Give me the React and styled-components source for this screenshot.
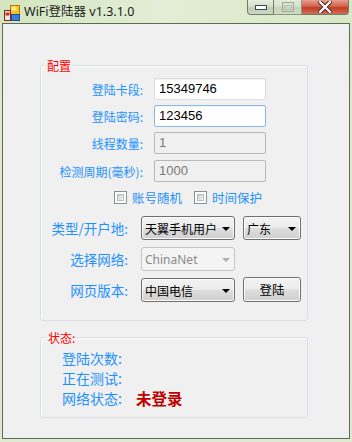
import React from 'react';
import styled, { createGlobalStyle } from 'styled-components';

const Global = createGlobalStyle`
  html, body { margin: 0; padding: 0; background: #dbe8cc; }
  body { width: 352px; height: 442px; overflow: hidden; font-family: "Noto Sans", "Noto Sans CJK SC", sans-serif; }
  * { box-sizing: border-box; }
`;

const Window = styled.div`
  width: 352px;
  height: 442px;
  display: flex;
  flex-direction: column;
  background: linear-gradient(180deg, #d2e4bc 0px, #dbe9cb 23px, #dde9d0 100%);
`;

const TitleBar = styled.div`
  height: 23px;
  flex-shrink: 0;
  display: flex;
  align-items: flex-start;
  background: linear-gradient(90deg, #d4e5bf 0%, #e2eed5 45%, #d8e7c6 100%);
`;

const AppIcon = styled.svg`
  margin: 5px 0 0 4px;
  flex-shrink: 0;
`;

const Title = styled.div`
  margin: 3px 0 0 4px;
  font-size: 12.5px;
  line-height: 17px;
  color: #1c1c1c;
  white-space: nowrap;
  flex: 1;
`;

const Caption = styled.div`
  display: flex;
  margin-right: 3px;
  height: 15px;
`;

const CapBtn = styled.div`
  width: ${p => p.$w}px;
  height: 15px;
  display: flex;
  align-items: center;
  justify-content: center;
  border: 1px solid #6f7f66;
  border-top: none;
  border-left: ${p => (p.$first ? '1px solid #6f7f66' : 'none')};
  border-radius: ${p => p.$radius};
  background: ${p =>
    p.$close
      ? 'linear-gradient(180deg, #e6a091 0%, #d4614b 45%, #c03d27 55%, #d46c55 100%)'
      : 'linear-gradient(180deg, #e6eedf 0%, #d3dfc9 45%, #bfccb4 55%, #cdd9c2 100%)'};
  opacity: ${p => (p.$dim ? 0.75 : 1)};
`;

const Client = styled.div`
  flex: 1;
  margin: 0 2px 3px 2px;
  border: 1px solid #5f6b56;
  background: #f0f0f0;
  display: flex;
  flex-direction: column;
  align-items: flex-start;
`;

const Group = styled.div`
  position: relative;
  margin: ${p => p.$mt}px 0 0 37px;
  width: 268px;
  height: ${p => p.$h}px;
  border: 1px solid #d5dfe5;
  border-radius: 3px;
  box-shadow: inset 1px 1px 0 #ffffff;
  display: flex;
  flex-direction: column;
  padding: ${p => p.$pad};
`;

const Legend = styled.span`
  position: absolute;
  top: -8px;
  left: ${p => p.$left}px;
  padding: 0 1px;
  background: #f0f0f0;
  color: #ff0000;
  font-family: "Noto Sans CJK SC", sans-serif;
  font-size: 12px;
  line-height: 15px;
`;

const Row = styled.div`
  display: flex;
  align-items: center;
  margin-top: ${p => p.$mt}px;
  height: ${p => p.$h}px;
  padding-left: ${p => p.$pl || 0}px;
`;

const Label = styled.div`
  width: ${p => p.$w}px;
  margin-right: ${p => p.$gap}px;
  text-align: right;
  color: #1e90ff;
  font-family: "Noto Sans CJK SC", sans-serif;
  font-size: ${p => p.$fs}px;
  white-space: nowrap;
`;

const TextBox = styled.div`
  width: 112px;
  height: 22px;
  border: 1px solid ${p => (p.$disabled ? '#b8b8b8' : p.$focus ? '#86b8e8' : '#dcdcdc')};
  border-radius: 2px;
  background: ${p => (p.$disabled ? '#f0f0f0' : '#ffffff')};
  color: ${p => (p.$disabled ? '#7a7a7a' : '#000000')};
  font-family: "Liberation Sans", sans-serif;
  font-size: 13px;
  line-height: 20px;
  padding-left: 4px;
  box-shadow: ${p => (p.$disabled ? 'none' : 'inset 0 1px 0 #f4f4f4')};
`;

const Check = styled.label`
  display: flex;
  align-items: center;
  margin-right: ${p => p.$mr}px;
  color: #1e90ff;
  font-family: "Noto Sans CJK SC", sans-serif;
  font-size: 12.5px;
  white-space: nowrap;
`;

const Box = styled.span`
  width: 13px;
  height: 13px;
  border: 1px solid #8e8f8f;
  background: #ffffff;
  margin-right: 5px;
  display: flex;
  padding: 2px;
  &::after {
    content: '';
    flex: 1;
    background: linear-gradient(135deg, #cbcfd5 0%, #f6f6f6 100%);
    border: 1px solid #b9bdc3;
  }
`;

const Combo = styled.div`
  width: ${p => p.$w}px;
  height: 24px;
  margin-right: ${p => p.$mr || 0}px;
  border: 1px solid ${p => (p.$disabled ? '#c6c6c6' : '#707070')};
  border-radius: 3px;
  background: ${p =>
    p.$disabled
      ? '#f4f4f4'
      : 'linear-gradient(180deg, #f3f3f3 0%, #ebebeb 48%, #dddddd 52%, #cfcfcf 100%)'};
  box-shadow: ${p => (p.$disabled ? 'none' : 'inset 0 0 0 1px #fbfbfb')};
  display: flex;
  align-items: center;
  justify-content: space-between;
  padding: 0 4px 0 3px;
  font-family: ${p => (p.$latin ? '"Noto Sans", sans-serif' : '"Noto Sans CJK SC", sans-serif')};
  font-size: 12px;
  color: ${p => (p.$disabled ? '#8a8a8a' : '#000000')};
  white-space: nowrap;
`;

const Arrow = styled.span`
  width: 0;
  height: 0;
  border-left: 4px solid transparent;
  border-right: 4px solid transparent;
  border-top: 4px solid ${p => (p.$disabled ? '#b0b0b0' : '#000000')};
  margin-top: 1px;
`;

const Button = styled.div`
  width: 58px;
  height: 25px;
  margin-top: -1px;
  border: 1px solid #707070;
  border-radius: 3px;
  background: linear-gradient(180deg, #f3f3f3 0%, #ebebeb 48%, #dddddd 52%, #cfcfcf 100%);
  box-shadow: inset 0 0 0 1px #fbfbfb;
  display: flex;
  align-items: center;
  justify-content: center;
  font-family: "Noto Sans CJK SC", sans-serif;
  font-size: 12.5px;
  color: #000;
`;

const StatusRow = styled.div`
  display: flex;
  align-items: center;
  height: 20px;
`;

const StatusLabel = styled.div`
  width: 74px;
  color: #1e90ff;
  font-family: "Noto Sans CJK SC", sans-serif;
  font-size: 14px;
  white-space: nowrap;
`;

const StatusValue = styled.div`
  color: #c00000;
  font-family: "Noto Sans CJK SC", sans-serif;
  font-size: 15.5px;
  font-weight: 700;
  white-space: nowrap;
`;

export default function App() {
  return (
    <>
      <Global />
      <Window>
        <TitleBar>
          <AppIcon width="16" height="16" viewBox="0 0 16 16">
            <rect x="6.5" y="0.5" width="9" height="9" fill="#f6c21c" stroke="#b07a10" />
            <rect x="7.5" y="1.5" width="5" height="4" fill="#ffe88a" />
            <rect x="0.5" y="5.5" width="6" height="10" fill="#e8e8e8" stroke="#8a2020" />
            <rect x="1.5" y="7.5" width="4" height="3" fill="#d42a1e" />
            <rect x="7.5" y="9.5" width="8" height="6" fill="#3a7fd8" stroke="#1c4f9a" />
          </AppIcon>
          <Title>WiFi登陆器 v1.3.1.0</Title>
          <Caption>
            <CapBtn $w={27} $first $radius="0 0 0 4px">
              <svg width="12" height="6" viewBox="0 0 12 6">
                <rect x="0.5" y="1.5" width="11" height="4" fill="#ffffff" stroke="#3a4650" />
              </svg>
            </CapBtn>
            <CapBtn $w={28} $dim $radius="0">
              <svg width="12" height="10" viewBox="0 0 12 10">
                <rect x="0.5" y="0.5" width="11" height="9" fill="none" stroke="#8a968a" />
                <rect x="2.5" y="3.5" width="7" height="4" fill="none" stroke="#a8b2a6" />
              </svg>
            </CapBtn>
            <CapBtn $w={47} $close $radius="0 0 4px 0">
              <svg width="14" height="12" viewBox="0 0 14 12">
                <path d="M2 1 L12 11 M12 1 L2 11" stroke="#4a2a26" strokeWidth="4.2" strokeLinecap="square" />
                <path d="M2 1 L12 11 M12 1 L2 11" stroke="#ffffff" strokeWidth="2.2" strokeLinecap="square" />
              </svg>
            </CapBtn>
          </Caption>
        </TitleBar>
        <Client>
          <Group $mt={41} $h={256} $pad="0">
            <Legend $left={5}>配置</Legend>
            <Row $mt={12} $h={22}>
              <Label $w={102} $gap={11} $fs={12}>登陆卡段:</Label>
              <TextBox>15349746</TextBox>
            </Row>
            <Row $mt={5} $h={22}>
              <Label $w={102} $gap={11} $fs={12}>登陆密码:</Label>
              <TextBox $focus>123456</TextBox>
            </Row>
            <Row $mt={5} $h={22}>
              <Label $w={102} $gap={11} $fs={12}>线程数量:</Label>
              <TextBox $disabled>1</TextBox>
            </Row>
            <Row $mt={6} $h={22}>
              <Label $w={102} $gap={11} $fs={12}>检测周期(毫秒):</Label>
              <TextBox $disabled>1000</TextBox>
            </Row>
            <Row $mt={9} $h={13} $pl={73}>
              <Check $mr={12}><Box />账号随机</Check>
              <Check $mr={0}><Box />时间保护</Check>
            </Row>
            <Row $mt={12} $h={24}>
              <Label $w={87} $gap={13} $fs={13.5}>类型/开户地:</Label>
              <Combo $w={94} $mr={8}>天翼手机用户<Arrow /></Combo>
              <Combo $w={58}>广东<Arrow /></Combo>
            </Row>
            <Row $mt={7} $h={24}>
              <Label $w={87} $gap={13} $fs={13.5}>选择网络:</Label>
              <Combo $w={94} $disabled $latin>ChinaNet<Arrow $disabled /></Combo>
            </Row>
            <Row $mt={7} $h={24}>
              <Label $w={87} $gap={13} $fs={13.5}>网页版本:</Label>
              <Combo $w={94} $mr={8}>中国电信<Arrow /></Combo>
              <Button>登陆</Button>
            </Row>
          </Group>
          <Group $mt={16} $h={81} $pad="10px 0 0 21px">
            <Legend $left={6}>状态:</Legend>
            <StatusRow>
              <StatusLabel>登陆次数:</StatusLabel>
            </StatusRow>
            <StatusRow>
              <StatusLabel>正在测试:</StatusLabel>
            </StatusRow>
            <StatusRow>
              <StatusLabel>网络状态:</StatusLabel>
              <StatusValue>未登录</StatusValue>
            </StatusRow>
          </Group>
        </Client>
      </Window>
    </>
  );
}
